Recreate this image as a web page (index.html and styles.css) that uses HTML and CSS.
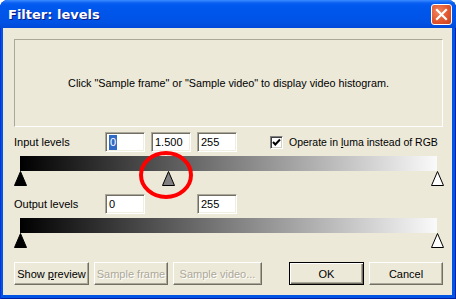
FILE: index.html
```html
<!DOCTYPE html>
<html>

	<head>
		<meta charset="UTF-8">
		<title>Filter: levels</title>
		<link rel="stylesheet" href="styles.css">
	</head>

	<body>
		<div class="window">
			<div class="titlebar">
				<span class="title">Filter: levels</span>
				<span class="close">
					<svg width="13" height="13" viewBox="0 0 13 13">
						<path d="M2 2 L11 11 M11 2 L2 11" stroke="#fff" stroke-width="2.2" stroke-linecap="square" />
					</svg>
				</span>
			</div>
			<div class="client">
				<div class="histogram">Click "Sample frame" or "Sample video" to display video histogram.</div>

				<div class="row">
					<span class="label">Input levels</span>
					<span class="edit"><span class="sel">0</span></span>
					<span class="edit">1.500</span>
					<span class="edit">255</span>
					<span class="check">
						<span class="box">
							<svg width="11" height="11" viewBox="0 0 11 11">
								<path d="M2 5 L4.3 7.5 L9 2.5" fill="none" stroke="#000" stroke-width="2" />
							</svg>
						</span>
						<span>Operate in <u>l</u>uma instead of RGB</span>
					</span>
				</div>
				<div class="slider">
					<div class="ramp"></div>
					<div class="marks">
						<svg class="mark" style="left: 0%" viewBox="0 0 13 15"><polygon points="6.5,0.5 12.5,14.5 0.5,14.5" fill="#000" stroke="#000" /></svg>
						<svg class="mark" style="left: 35.4%" viewBox="0 0 13 15"><polygon points="6.5,0.5 12.5,14.5 0.5,14.5" fill="#808080" stroke="#000" /></svg>
						<svg class="mark" style="left: 100%" viewBox="0 0 13 15"><polygon points="6.5,0.5 12.5,14.5 0.5,14.5" fill="#fff" stroke="#000" /></svg>
					</div>
					<svg class="callout" width="54" height="48" viewBox="0 0 54 48">
						<ellipse cx="27" cy="24" rx="25" ry="22" fill="none" stroke="#f00" stroke-width="4" />
					</svg>
				</div>

				<div class="row out">
					<span class="label">Output levels</span>
					<span class="edit">0</span>
					<span class="edit hi">255</span>
				</div>
				<div class="slider">
					<div class="ramp"></div>
					<div class="marks">
						<svg class="mark" style="left: 0%" viewBox="0 0 13 15"><polygon points="6.5,0.5 12.5,14.5 0.5,14.5" fill="#000" stroke="#000" /></svg>
						<svg class="mark" style="left: 100%" viewBox="0 0 13 15"><polygon points="6.5,0.5 12.5,14.5 0.5,14.5" fill="#fff" stroke="#000" /></svg>
					</div>
				</div>

				<div class="buttons">
					<span class="btn w75"><span>Show <u>p</u>review</span></span>
					<span class="btn w74 off">Sample frame</span>
					<span class="btn w89 off">Sample video...</span>
					<span class="btn w75 def">OK</span>
					<span class="btn w74">Cancel</span>
				</div>
			</div>
		</div>
	</body>

</html>
```

FILE: styles.css
```css
* {
	margin: 0;
	padding: 0;
	box-sizing: border-box;
}

body {
	background: #fff;
	overflow: hidden;
	font-family: "Liberation Sans", Arial, sans-serif;
	font-size: 11px;
	color: #000;
}

.window {
	width: 456px;
	height: 299px;
	display: flex;
	flex-direction: column;
	background: #0055e5;
	border-radius: 8px 8px 0 0;
	box-shadow: inset 1px 0 #0831d9, inset -1px -1px #001ea0;
}

.titlebar {
	height: 28px;
	display: flex;
	align-items: center;
	padding: 0 4px 1px 8px;
	border-radius: 8px 8px 0 0;
	background: linear-gradient(to bottom, #3c8cff 0, #0a5ff2 3px, #0058ee 6px, #0055ea 50%, #0052e4 80%, #0049d8 100%);
}

.title {
	flex: 1;
	color: #fff;
	font-family: "DejaVu Sans", "Liberation Sans", sans-serif;
	font-weight: bold;
	font-size: 13px;
	text-shadow: 1px 1px #0a1883;
	margin-top: 1px;
}

.close {
	width: 21px;
	height: 21px;
	display: flex;
	align-items: center;
	justify-content: center;
	border: 1px solid #fff;
	border-radius: 3px;
	background: radial-gradient(circle at 35% 35%, #f0865e 0, #e2562f 55%, #c8401c 100%);
	margin-top: 1px;
}

.client {
	flex: 1;
	margin: 0 4px 4px 3px;
	padding: 11px 9px 10px 11px;
	background: #ece9d8;
	display: flex;
	flex-direction: column;
}

.histogram {
	height: 88px;
	display: flex;
	align-items: center;
	justify-content: center;
	font-size: 10.8px;
	border: 1px solid;
	border-color: #aca899 #fff #fff #aca899;
}

.row {
	height: 20px;
	margin-top: 5px;
	display: grid;
	grid-template-columns: 85px 40px 40px 40px auto;
	column-gap: 6px;
	align-items: center;
}

.row.out {
	margin-top: 8px;
}

.edit {
	height: 20px;
	background: #fff;
	border: 1px solid;
	border-color: #aca899 #fff #fff #aca899;
	box-shadow: inset 1px 1px #716f64, inset -1px -1px #f1efe2;
	padding: 0 3px;
	line-height: 18px;
}

.edit.hi {
	grid-column: 4;
}

.sel {
	background: #316ac5;
	color: #fff;
	padding: 0 1px;
	display: inline-block;
	line-height: 15px;
}

.check {
	display: flex;
	align-items: center;
	margin-left: 27px;
	white-space: nowrap;
	font-size: 10.5px;
}

.box {
	width: 13px;
	height: 13px;
	margin-right: 6px;
	background: #fff;
	border: 1px solid;
	border-color: #808080 #fff #fff #808080;
	box-shadow: inset 1px 1px #404040, inset -1px -1px #d4d0c8;
	display: flex;
	align-items: center;
	justify-content: center;
}

.slider {
	position: relative;
	margin-top: 4px;
	padding: 0 6px;
	height: 30px;
}

.ramp {
	height: 15px;
	background: linear-gradient(to right, #000, #fafafa);
}

.marks {
	position: relative;
	height: 15px;
}

.mark {
	position: absolute;
	top: 0;
	width: 13px;
	height: 15px;
	margin-left: -6px;
}

.callout {
	position: absolute;
	left: 125px;
	top: -5px;
}

.buttons {
	display: flex;
	margin-top: 14px;
	height: 23px;
}

.btn {
	height: 23px;
	display: flex;
	align-items: center;
	justify-content: center;
	border: 1px solid;
	border-color: #fff #716f64 #716f64 #fff;
	box-shadow: inset -1px -1px #aca899;
	margin-right: 5px;
}

.w75 { width: 75px; }
.w74 { width: 74px; }
.w89 { width: 89px; }

.btn.off {
	color: #aca899;
	text-shadow: 1px 1px #fff;
}

.btn.def {
	margin-left: auto;
	border-color: #000;
	box-shadow: inset 1px 1px #fff, inset -1px -1px #716f64, inset -2px -2px #aca899;
}

.btn:last-child {
	margin-right: 0;
}
```
